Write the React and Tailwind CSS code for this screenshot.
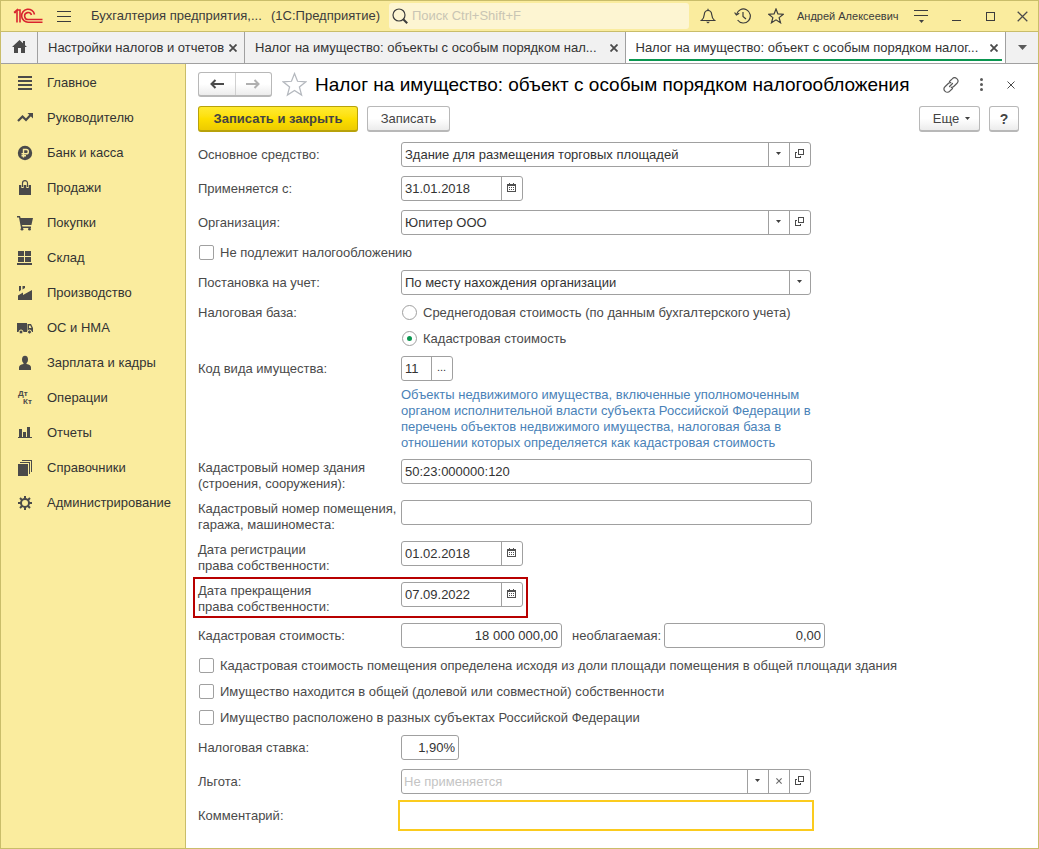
import { useState } from 'react';

const Logo = () => (
  <svg width="30" height="16" viewBox="0 0 30 16" fill="none" stroke="#d9232e" strokeWidth="1.6">
    <path d="M1 4.500L4 2v12.500M4 2h3v12.500M1 4.500h2" />
    <path d="M21.500 6.500A6.500 6.500 0 1 0 15.500 14.200h14" />
    <path d="M18.500 7a3.500 3.500 0 1 0-3 4.500h14" />
  </svg>
);

const BellIcon = () => (
  <svg width="16" height="16" viewBox="0 0 16 16" fill="none" stroke="#3c3c3c" strokeWidth="1.200">
    <path d="M1.500 12.500c2-1.500 2.500-3 2.800-6C4.500 4 5.800 2.500 8 2.500s3.500 1.500 3.700 4c.3 3 .8 4.500 2.800 6z" />
    <path d="M8 .8v1.700" /><path d="M6 13.800h4l-2 1.800z" fill="#3c3c3c" stroke="none" />
  </svg>
);

const HistoryIcon = () => (
  <svg width="17" height="16" viewBox="0 0 17 16" fill="none" stroke="#3c3c3c" strokeWidth="1.200">
    <path d="M2.500 6.500A7 7 0 1 1 3.600 12" /><path d="M.6 4.500l1.800 2.500 2.800-1.800" /><path d="M9 4v4.500l3 2.500" />
  </svg>
);

const StarIcon = ({ size = 16, color = '#3c3c3c' }) => (
  <svg width={size} height={size} viewBox="0 0 24 24" fill="none" stroke={color} strokeWidth={size > 20 ? 1.200 : 1.800}>
    <path d="M12 1.500l2.900 7.400 8 .5-6.200 5 2.100 7.800L12 17.800l-6.800 4.400 2.100-7.800-6.200-5 8-.5z" />
  </svg>
);

const Cross = ({ size = 8, width = 1.200, color = '#4a4a4a' }) => (
  <svg width={size} height={size} viewBox="0 0 8 8" stroke={color} strokeWidth={width}>
    <path d="M.5 .5l7 7M7.500 .5l-7 7" />
  </svg>
);

const Caret = ({ size = 5, color = '#404040' }) => (
  <svg width={size} height={size === 5 ? 3 : 5} viewBox="0 0 10 6" preserveAspectRatio="none" fill={color}>
    <path d="M0 0h10L5 6z" />
  </svg>
);

const OpenIcon = () => (
  <svg width="9" height="9" viewBox="0 0 9 9" fill="none" stroke="#4a4a4a" shapeRendering="crispEdges">
    <path d="M3.500 .5h5v5h-5z" /><path d="M2 3.500H.5v5h5V7" />
  </svg>
);

const CalendarIcon = () => (
  <svg width="9" height="9" viewBox="0 0 9 9" shapeRendering="crispEdges">
    <path d="M.5 1.500h8v7h-8z" fill="none" stroke="#505050" />
    <path d="M1 2h7v1H1zM2 0h1v1H2zM6 0h1v1H6zM2 4h1v1H2zM4 4h1v1H4zM6 4h1v1H6zM2 6h1v1H2zM4 6h1v1H4zM6 6h1v1H6z" fill="#505050" />
  </svg>
);

const LinkIcon = () => (
  <svg width="16" height="16" viewBox="0 0 16 16" fill="none" stroke="#5a5a5a" strokeWidth="1.200" strokeLinecap="round">
    <path d="M6.500 4.500l2.700-2.700a3.100 3.100 0 0 1 4.800 4.500L10.700 9.500a3 3 0 0 1-2.500 .8" />
    <path d="M9.500 11.500l-2.700 2.700A3.100 3.100 0 0 1 2 9.700L5.300 6.500a3 3 0 0 1 2.500-.8" />
    <path d="M6.500 9.500l3-3" />
  </svg>
);

const HomeIcon = () => (
  <svg width="15" height="13" viewBox="0 0 15 13" fill="#4a4a4a">
    <path d="M7.500 0L11 3.300V1h2v4.200L15 7h-2v6H9V8H6v5H2V7H0z" />
  </svg>
);

const ArrowIcon = ({ flip, color }) => (
  <svg width="14" height="10" viewBox="0 0 14 10" fill="none" stroke={color} strokeWidth="2">
    {flip ? <path d="M0 5h12M8.500 1L12.500 5l-4 4" /> : <path d="M14 5H2M5.500 1L1.500 5l4 4" />}
  </svg>
);

const sections = [
  { label: 'Главное', icon: <path d="M1 1h14v2H1zM1 5h14v2H1zM1 9h14v2H1zM1 13h14v2H1z" shapeRendering="crispEdges" /> },
  {
    label: 'Руководителю',
    icon: <><path d="M1 11l4.500-4.500 3.500 3.500 5-5.500" fill="none" stroke="#4a4a4a" strokeWidth="2.200" /><path d="M10.500 3H16v5.500z" /></>,
  },
  {
    label: 'Банк и касса',
    icon: <><circle cx="8" cy="8" r="7.200" /><path d="M6.500 12.500V4.500h2.700a2 2 0 0 1 0 4.300H4.500M4.500 10.700h4.500" fill="none" stroke="#faec9e" strokeWidth="1.400" /></>,
  },
  {
    label: 'Продажи',
    icon: <><path d="M2 5h12v10H2z" /><path d="M5.500 8V3.500a2.500 2.500 0 0 1 5 0V8" fill="none" stroke="#faec9e" strokeWidth="2.400" /><path d="M5.500 7V3.200a2.500 2.500 0 0 1 5 0V7" fill="none" stroke="#4a4a4a" strokeWidth="1.200" /></>,
  },
  {
    label: 'Покупки',
    icon: <><path d="M0 1h3l.6 2H16l-1.600 7H5l.4 1.500H14V13H4L2 2.500H0z" /><circle cx="5" cy="14.200" r="1.400" /><circle cx="12.500" cy="14.200" r="1.400" /></>,
  },
  { label: 'Склад', icon: <path d="M1 1h6v5H1zM8 1h6v5H8zM1 7h6v5H1zM8 7h6v5H8zM0 13h15v2H0z" shapeRendering="crispEdges" /> },
  { label: 'Производство', icon: <path d="M1 15v-4.500l5-3V10l9-5v10zM2 1h2v4L2 6.500zM5.500 1H8v2L5.500 4.500z" /> },
  {
    label: 'ОС и НМА',
    icon: <><path d="M0 3h10v9H0zM10.500 4h3.500l2 4v4h-5.500z" /><path d="M12 5.500h1.300L14.500 8H12z" fill="#faec9e" /><circle cx="4" cy="12" r="2" stroke="#faec9e" /><circle cx="12.500" cy="12" r="2" stroke="#faec9e" /></>,
  },
  {
    label: 'Зарплата и кадры',
    icon: <><ellipse cx="8" cy="4.500" rx="3" ry="3.800" /><path d="M6.500 7h3v2c3 .6 4.500 1.500 4.500 3.500V15H2v-2.500C2 10.500 3.500 9.600 6.500 9z" /></>,
  },
  {
    label: 'Операции',
    icon: <><text x="1" y="6" fontSize="8" fontWeight="bold">Дт</text><text x="6" y="14" fontSize="8" fontWeight="bold">Кт</text></>,
  },
  { label: 'Отчеты', icon: <path d="M2 4h3v9H2zM6 7h3v6H6zM10 2h3v11h-3zM1 12h14v1H1z" shapeRendering="crispEdges" /> },
  {
    label: 'Справочники',
    icon: <><path d="M1 4h10v12H1z" /><path d="M3 2.500h9.500V14M5 .5h9.500V12" fill="none" stroke="#4a4a4a" shapeRendering="crispEdges" /></>,
  },
  {
    label: 'Администрирование',
    icon: <><circle cx="8" cy="8" r="4" fill="none" stroke="#4a4a4a" strokeWidth="2" /><path d="M8 1v3M8 12v3M1 8h3M12 8h3M3 3l2.200 2.200M10.800 10.800L13 13M3 13l2.200-2.200M10.800 5.200L13 3" fill="none" stroke="#4a4a4a" strokeWidth="2" /></>,
  },
];

const tabs = [
  { title: 'Настройки налогов и отчетов', width: 'w-[207px] shrink-0' },
  { title: 'Налог на имущество: объекты с особым порядком нал...', width: 'min-w-0 flex-1' },
  { title: 'Налог на имущество: объект с особым порядком налог...', width: 'min-w-0 flex-1', active: true },
];

const boxCls = 'flex h-[25px] rounded-[3px] border border-[#a0a0a0] bg-white text-[#333]';
const cellCls = 'flex w-[21px] shrink-0 items-center justify-center border-l border-[#a0a0a0] pr-px pb-0.5';
const buttonCls = 'flex items-center justify-center rounded-[3px] border border-b-2 border-[#b8b8b8] bg-linear-to-b from-white from-50% to-[#ececec] text-[#444]';

function TitleBar() {
  return (
    <header className="flex h-[31px] shrink-0 items-center border-b border-[#c9bd6a] text-[#3c3c3c]">
      <div className="flex w-[388px] shrink-0 items-center pl-3">
        <Logo />
        <button className="ml-3.5 flex w-3.5 flex-col gap-1" aria-label="Меню">
          <span className="h-px w-full bg-[#3c3c3c]" />
          <span className="h-px w-full bg-[#3c3c3c]" />
          <span className="h-px w-full bg-[#3c3c3c]" />
        </button>
        <span className="ml-5 w-[180px] whitespace-nowrap">Бухгалтерия предприятия,...</span>
        <span className="whitespace-nowrap">(1С:Предприятие)</span>
      </div>
      <label className="flex h-[26px] min-w-0 max-w-[300px] flex-1 items-center gap-1 rounded-[3px] bg-[#fdf5d2] pl-[3px]">
        <svg width="16" height="16" viewBox="0 0 16 16" fill="none" stroke="#3c3c3c">
          <circle cx="7" cy="7" r="6" strokeWidth="1.200" /><path d="M11.200 11.200l4 4" strokeWidth="2" />
        </svg>
        <input className="min-w-0 flex-1 outline-none placeholder:text-[#c9c5b4]" placeholder="Поиск Ctrl+Shift+F" aria-label="Поиск" />
      </label>
      <div className="ml-auto flex shrink-0 items-center">
        <button className="flex w-[34px] justify-center" aria-label="Уведомления"><BellIcon /></button>
        <button className="flex w-[34px] justify-center" aria-label="История"><HistoryIcon /></button>
        <button className="flex w-[34px] justify-center" aria-label="Избранное"><StarIcon /></button>
        <span className="ml-1 w-[106px] whitespace-nowrap text-[11px]">Андрей Алексеевич</span>
        <button className="flex w-9 flex-col items-center gap-1" aria-label="Сервис">
          <span className="h-px w-3.5 bg-[#3c3c3c]" />
          <span className="h-px w-3.5 bg-[#3c3c3c]" />
          <Caret />
        </button>
        <button className="flex h-2.5 w-[34px] items-end justify-center" aria-label="Свернуть"><span className="h-px w-[9px] bg-[#3c3c3c]" /></button>
        <button className="flex w-[34px] justify-center" aria-label="Развернуть"><span className="size-[9px] border border-[#3c3c3c]" /></button>
        <button className="flex w-[31px] justify-center" aria-label="Закрыть"><Cross size={11} width={0.900} /></button>
      </div>
    </header>
  );
}

function TabBar() {
  return (
    <nav className="flex h-8 shrink-0 border-b border-[#a0a0a0] bg-[#f1f1f1]">
      <button className="flex w-[37px] shrink-0 items-center justify-center border-r border-[#a0a0a0] pb-0.5" aria-label="Начальная страница">
        <HomeIcon />
      </button>
      {tabs.map((tab) => (
        <div key={tab.title} className={`${tab.width} flex border-r border-[#a0a0a0] px-[3px] ${tab.active ? 'bg-white' : ''}`}>
          <div className={`mb-0.5 flex min-w-0 flex-1 items-center justify-between border-b-2 pt-1 pr-1 pl-[7px] ${tab.active ? 'border-[#0a9650]' : 'border-transparent'}`}>
            <a href="#" className="overflow-hidden whitespace-nowrap text-[#333]">{tab.title}</a>
            <button className="shrink-0" aria-label="Закрыть вкладку"><Cross width={1.800} /></button>
          </div>
        </div>
      ))}
      <button className="flex w-8 shrink-0 items-center justify-center" aria-label="Все вкладки"><Caret size={9} color="#5a5a5a" /></button>
    </nav>
  );
}

function Sidebar() {
  return (
    <aside className="w-[185px] shrink-0 border-r border-[#c9bd6a] pt-px">
      {sections.map((s) => (
        <a key={s.label} href="#" className="flex h-[35px] items-center gap-3.5 pl-4 text-[#333]">
          <svg width="16" height="16" viewBox="0 0 16 16" fill="#4a4a4a">{s.icon}</svg>
          <span>{s.label}</span>
        </a>
      ))}
    </aside>
  );
}

function Row({ id, label, children, className = '' }) {
  const lines = Array.isArray(label);
  return (
    <div className={`flex items-start ${className}`}>
      <label htmlFor={id} className={`w-[203px] shrink-0 whitespace-nowrap ${lines ? '-mb-px pt-px leading-4' : 'leading-[25px]'}`}>
        {lines ? <>{label[0]}<br />{label[1]}</> : label}
      </label>
      {children}
    </div>
  );
}

function TextField({ id, value = '', width = 'w-[411px]', align = '' }) {
  const [text, setText] = useState(value);
  return <input id={id} className={`${boxCls} ${width} ${align} px-[3px] outline-none`} value={text} onChange={(e) => setText(e.target.value)} />;
}

function DateField({ id, value }) {
  return (
    <div className={`${boxCls} w-[122px]`}>
      <input id={id} className="min-w-0 flex-1 pl-[3px] outline-none" defaultValue={value} />
      <button type="button" className={cellCls} aria-label="Выбрать дату"><CalendarIcon /></button>
    </div>
  );
}

function SelectField({ id, value, muted, clearable, openable }) {
  return (
    <div className={`${boxCls} w-[410px]`}>
      <select id={id} className={`min-w-0 flex-1 appearance-none outline-none ${muted ? 'pl-0.5 text-[#c4c4c4]' : 'pl-[3px]'}`}>
        <option>{value}</option>
      </select>
      <span className={`${cellCls} pointer-events-none`}><Caret /></span>
      {clearable && <button type="button" className={cellCls} aria-label="Очистить"><Cross size={6} width={1.500} color="#6a6a6a" /></button>}
      {openable && <button type="button" className={cellCls} aria-label="Открыть"><OpenIcon /></button>}
    </div>
  );
}

function Check({ children }) {
  return (
    <label className="flex h-[17px] items-center gap-1.5 pl-px">
      <input type="checkbox" className="size-[15px] shrink-0 appearance-none rounded-[2px] border border-[#a0a0a0] bg-white checked:bg-[#0a9650]" />
      {children}
    </label>
  );
}

function Radio({ children, checked }) {
  return (
    <label className="flex h-[17px] items-center gap-1.5 pl-px">
      <input
        type="radio"
        name="base"
        defaultChecked={checked}
        className="flex size-[15px] shrink-0 appearance-none items-center justify-center rounded-full border border-[#a0a0a0] before:size-[5px] before:rounded-full checked:before:bg-[#0a9650]"
      />
      {children}
    </label>
  );
}

function PropertyForm() {
  return (
    <form className="flex flex-col gap-[9px] pt-2.5">
      <Row id="asset" label="Основное средство:">
        <SelectField id="asset" value="Здание для размещения торговых площадей" openable />
      </Row>
      <Row id="from" label="Применяется с:"><DateField id="from" value="31.01.2018" /></Row>
      <Row id="org" label="Организация:"><SelectField id="org" value="Юпитер ООО" openable /></Row>
      <Check>Не подлежит налогообложению</Check>
      <Row id="reg" label="Постановка на учет:"><SelectField id="reg" value="По месту нахождения организации" /></Row>
      <div className="flex items-start" role="radiogroup" aria-labelledby="base-label">
        <span id="base-label" className="w-[203px] shrink-0 leading-[17px]">Налоговая база:</span>
        <div className="flex flex-col gap-[9px]">
          <Radio>Среднегодовая стоимость (по данным бухгалтерского учета)</Radio>
          <Radio checked>Кадастровая стоимость</Radio>
        </div>
      </div>
      <Row id="code" label="Код вида имущества:">
        <div>
          <div className={`${boxCls} w-[52px]`}>
            <input id="code" className="min-w-0 flex-1 pl-[3px] outline-none" defaultValue="11" />
            <button type="button" className={`${cellCls} text-[11px]`} aria-label="Выбрать код">...</button>
          </div>
          <p className="mt-1.5 -mb-px leading-4 text-[#4a82b8]">
            Объекты недвижимого имущества, включенные уполномоченным<br />
            органом исполнительной власти субъекта Российской Федерации в<br />
            перечень объектов недвижимого имущества, налоговая база в<br />
            отношении которых определяется как кадастровая стоимость
          </p>
        </div>
      </Row>
      <Row id="building" label={['Кадастровый номер здания', '(строения, сооружения):']}>
        <TextField id="building" value="50:23:000000:120" />
      </Row>
      <Row id="room" label={['Кадастровый номер помещения,', 'гаража, машиноместа:']}><TextField id="room" /></Row>
      <Row id="start" label={['Дата регистрации', 'права собственности:']}><DateField id="start" value="01.02.2018" /></Row>
      <Row id="end" label={['Дата прекращения', 'права собственности:']} className="relative">
        <DateField id="end" value="07.09.2022" />
        <span className="pointer-events-none absolute -top-[5px] -bottom-1 -left-[5px] w-[335px] border-2 border-[#b80000]" />
      </Row>
      <Row id="cost" label="Кадастровая стоимость:">
        <TextField id="cost" value="18 000 000,00" width="w-[161px]" align="text-right" />
        <label htmlFor="exempt" className="w-[102px] pl-2.5 leading-[25px]">необлагаемая:</label>
        <TextField id="exempt" value="0,00" width="w-[161px]" align="text-right" />
      </Row>
      <Check>Кадастровая стоимость помещения определена исходя из доли площади помещения в общей площади здания</Check>
      <Check>Имущество находится в общей (долевой или совместной) собственности</Check>
      <Check>Имущество расположено в разных субъектах Российской Федерации</Check>
      <Row id="rate" label="Налоговая ставка:"><TextField id="rate" value="1,90%" width="w-[58px]" align="text-right" /></Row>
      <Row id="benefit" label="Льгота:"><SelectField id="benefit" value="Не применяется" muted clearable openable /></Row>
      <Row id="comment" label="Комментарий:">
        <input id="comment" className="h-[25px] w-[410px] px-1 outline-2 outline-offset-1 outline-[#fbcb1e]" />
      </Row>
    </form>
  );
}

export default function App() {
  return (
    <div className="flex min-h-screen flex-col border border-[#c9bd6a] bg-[#faec9e] font-['Liberation_Sans',Arial,sans-serif] text-[13px]">
      <TitleBar />
      <TabBar />
      <div className="flex flex-1">
        <Sidebar />
        <main className="min-w-0 flex-1 bg-white pt-2 pb-5 pl-3 text-[#4a4a4a]">
          <div className="flex h-[25px] items-center pr-3">
            <div className={`${buttonCls} h-[25px] w-[74px] shrink-0`}>
              <button className="flex h-full flex-1 items-center justify-center" aria-label="Назад"><ArrowIcon color="#4a4a4a" /></button>
              <button className="flex h-full flex-1 items-center justify-center border-l border-[#d0d0d0]" aria-label="Вперед"><ArrowIcon flip color="#b0b0b0" /></button>
            </div>
            <button className="mr-2 ml-2.5 shrink-0" aria-label="В избранное"><StarIcon size={25} color="#b4b8be" /></button>
            <h1 className="text-[19px] leading-6 whitespace-nowrap text-black">Налог на имущество: объект с особым порядком налогообложения</h1>
            <div className="ml-auto flex items-center">
              <button className="flex w-[30px] justify-center" aria-label="Ссылка"><LinkIcon /></button>
              <button className="flex w-[30px] flex-col items-center gap-0.5" aria-label="Ещё действия">
                <span className="size-[3px] rounded-full bg-[#5a5a5a]" />
                <span className="size-[3px] rounded-full bg-[#5a5a5a]" />
                <span className="size-[3px] rounded-full bg-[#5a5a5a]" />
              </button>
              <button className="flex w-[30px] justify-center" aria-label="Закрыть"><Cross width={1} /></button>
            </div>
          </div>
          <div className="mt-[9px] flex gap-[9px] pr-[19px]">
            <button className="h-[26px] w-40 rounded-[3px] border border-b-2 border-[#b8a20a] bg-linear-to-b from-[#ffea2e] via-[#fddf00] to-[#edcb00] font-bold text-[#444]">Записать и закрыть</button>
            <button className={`${buttonCls} h-[26px] w-[83px]`}>Записать</button>
            <button className={`${buttonCls} ml-auto h-[26px] w-[61px] gap-1.5 pl-1`}>Еще <Caret /></button>
            <button className={`${buttonCls} h-[26px] w-[30px] text-sm font-bold`}>?</button>
          </div>
          <PropertyForm />
        </main>
      </div>
    </div>
  );
}
